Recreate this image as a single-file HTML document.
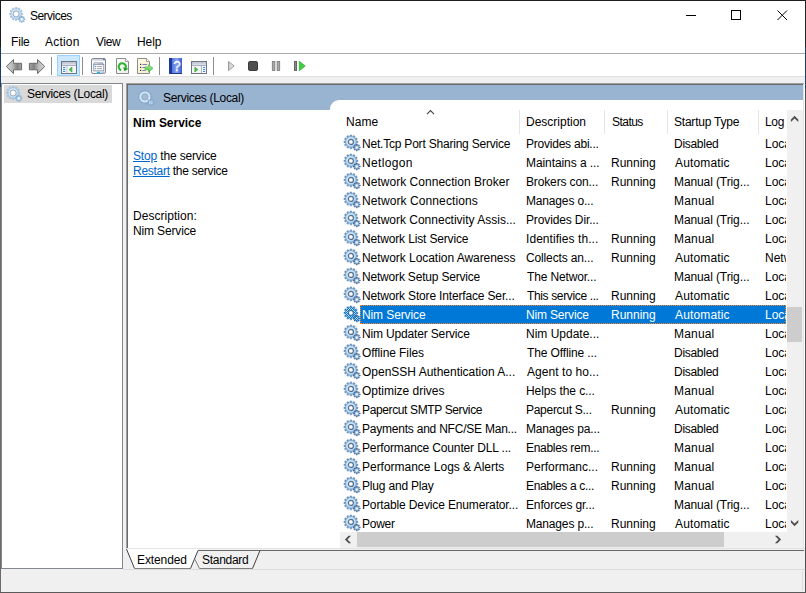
<!DOCTYPE html>
<html><head><meta charset="utf-8"><title>Services</title>
<style>
html,body{margin:0;padding:0}
body{width:806px;height:593px;overflow:hidden;background:#f0f0f0;font-family:"Liberation Sans",sans-serif;font-size:12px;color:#000;position:relative}
.a{position:absolute}
.t{position:absolute;white-space:nowrap;line-height:15px;height:15px}
.lk{color:#0066cc;text-decoration:underline}
svg{display:block;position:absolute;overflow:visible}
</style></head><body>
<svg width="0" height="0">
<defs>
<radialGradient id="gb" cx="45%" cy="40%" r="65%"><stop offset="0" stop-color="#e4f3fc"/><stop offset="0.6" stop-color="#c0e0f6"/><stop offset="1" stop-color="#9cc3e6"/></radialGradient>
<radialGradient id="gb2" cx="45%" cy="40%" r="65%"><stop offset="0" stop-color="#eef8fe"/><stop offset="0.6" stop-color="#d2ebfa"/><stop offset="1" stop-color="#b4d6f0"/></radialGradient>
<linearGradient id="ar" x1="0" y1="0" x2="0" y2="1"><stop offset="0" stop-color="#c9c9c9"/><stop offset="0.5" stop-color="#8a8a8a"/><stop offset="1" stop-color="#9c9c9c"/></linearGradient>
<linearGradient id="hb" x1="0" y1="0" x2="1" y2="0"><stop offset="0" stop-color="#3a5cc8"/><stop offset="0.5" stop-color="#7a9af0"/><stop offset="1" stop-color="#3f62cf"/></linearGradient>
<pattern id="chk" width="2" height="2" patternUnits="userSpaceOnUse"><rect x="0" y="0" width="1" height="1" fill="#0078d7"/><rect x="1" y="1" width="1" height="1" fill="#0078d7"/></pattern>

<mask id="gmask"><g fill="#fff"><path d="M13.85 6.05L13.85 7.75L11.92 7.79L11.69 8.64L13.34 9.64L12.49 11.11L10.81 10.18L10.18 10.81L11.11 12.49L9.64 13.34L8.64 11.69L7.79 11.92L7.75 13.85L6.05 13.85L6.01 11.92L5.16 11.69L4.16 13.34L2.69 12.49L3.62 10.81L2.99 10.18L1.31 11.11L0.46 9.64L2.11 8.64L1.88 7.79L-0.05 7.75L-0.05 6.05L1.88 6.01L2.11 5.16L0.46 4.16L1.31 2.69L2.99 3.62L3.62 2.99L2.69 1.31L4.16 0.46L5.16 2.11L6.01 1.88L6.05 -0.05L7.75 -0.05L7.79 1.88L8.64 2.11L9.64 0.46L11.11 1.31L10.18 2.99L10.81 3.62L12.49 2.69L13.34 4.16L11.69 5.16L11.92 6.01Z"/><circle cx="6.9" cy="6.9" r="5.6"/><path d="M16.26 11.95L16.26 13.05L14.85 12.97L14.58 13.61L15.63 14.56L14.86 15.33L13.91 14.28L13.27 14.55L13.35 15.96L12.25 15.96L12.33 14.55L11.69 14.28L10.74 15.33L9.97 14.56L11.02 13.61L10.75 12.97L9.34 13.05L9.34 11.95L10.75 12.03L11.02 11.39L9.97 10.44L10.74 9.67L11.69 10.72L12.33 10.45L12.25 9.04L13.35 9.04L13.27 10.45L13.91 10.72L14.86 9.67L15.63 10.44L14.58 11.39L14.85 12.03Z"/><circle cx="12.8" cy="12.5" r="2.5"/></g><circle cx="6.9" cy="6.9" r="2.4" fill="#000"/></mask>
<g id="g0">
<path d="M13.85 6.05L13.85 7.75L11.92 7.79L11.69 8.64L13.34 9.64L12.49 11.11L10.81 10.18L10.18 10.81L11.11 12.49L9.64 13.34L8.64 11.69L7.79 11.92L7.75 13.85L6.05 13.85L6.01 11.92L5.16 11.69L4.16 13.34L2.69 12.49L3.62 10.81L2.99 10.18L1.31 11.11L0.46 9.64L2.11 8.64L1.88 7.79L-0.05 7.75L-0.05 6.05L1.88 6.01L2.11 5.16L0.46 4.16L1.31 2.69L2.99 3.62L3.62 2.99L2.69 1.31L4.16 0.46L5.16 2.11L6.01 1.88L6.05 -0.05L7.75 -0.05L7.79 1.88L8.64 2.11L9.64 0.46L11.11 1.31L10.18 2.99L10.81 3.62L12.49 2.69L13.34 4.16L11.69 5.16L11.92 6.01Z" fill="#7298bf" stroke="#6089b4" stroke-width="0.5"/>
<circle cx="6.9" cy="6.9" r="5.3" fill="url(#gb)" stroke="#7298bf" stroke-width="0.5"/>
<path d="M16.26 11.95L16.26 13.05L14.85 12.97L14.58 13.61L15.63 14.56L14.86 15.33L13.91 14.28L13.27 14.55L13.35 15.96L12.25 15.96L12.33 14.55L11.69 14.28L10.74 15.33L9.97 14.56L11.02 13.61L10.75 12.97L9.34 13.05L9.34 11.95L10.75 12.03L11.02 11.39L9.97 10.44L10.74 9.67L11.69 10.72L12.33 10.45L12.25 9.04L13.35 9.04L13.27 10.45L13.91 10.72L14.86 9.67L15.63 10.44L14.58 11.39L14.85 12.03Z" fill="#4f76a6" stroke="#40628f" stroke-width="0.5"/>
<circle cx="12.8" cy="12.5" r="2.0" fill="#a6c9e8"/>
<circle cx="12.8" cy="12.5" r="1.0" fill="#f4f9fd"/>
<circle cx="6.9" cy="6.9" r="2.5" fill="#fff" stroke="#546c8a" stroke-width="1.2"/>
<circle cx="6.9" cy="6.9" r="1.6" fill="none" stroke="#c3d3e6" stroke-width="0.7" stroke-dasharray="0.9 0.9"/>
</g>
<g id="gt">
<path d="M13.85 6.05L13.85 7.75L11.92 7.79L11.69 8.64L13.34 9.64L12.49 11.11L10.81 10.18L10.18 10.81L11.11 12.49L9.64 13.34L8.64 11.69L7.79 11.92L7.75 13.85L6.05 13.85L6.01 11.92L5.16 11.69L4.16 13.34L2.69 12.49L3.62 10.81L2.99 10.18L1.31 11.11L0.46 9.64L2.11 8.64L1.88 7.79L-0.05 7.75L-0.05 6.05L1.88 6.01L2.11 5.16L0.46 4.16L1.31 2.69L2.99 3.62L3.62 2.99L2.69 1.31L4.16 0.46L5.16 2.11L6.01 1.88L6.05 -0.05L7.75 -0.05L7.79 1.88L8.64 2.11L9.64 0.46L11.11 1.31L10.18 2.99L10.81 3.62L12.49 2.69L13.34 4.16L11.69 5.16L11.92 6.01Z" fill="#a3c3e2" stroke="#94b8dc" stroke-width="0.5"/>
<circle cx="6.9" cy="6.9" r="5.3" fill="url(#gb2)" stroke="#a3c3e2" stroke-width="0.5"/>
<path d="M16.26 11.95L16.26 13.05L14.85 12.97L14.58 13.61L15.63 14.56L14.86 15.33L13.91 14.28L13.27 14.55L13.35 15.96L12.25 15.96L12.33 14.55L11.69 14.28L10.74 15.33L9.97 14.56L11.02 13.61L10.75 12.97L9.34 13.05L9.34 11.95L10.75 12.03L11.02 11.39L9.97 10.44L10.74 9.67L11.69 10.72L12.33 10.45L12.25 9.04L13.35 9.04L13.27 10.45L13.91 10.72L14.86 9.67L15.63 10.44L14.58 11.39L14.85 12.03Z" fill="#8fb2d6" stroke="#7fa4cc" stroke-width="0.5"/>
<circle cx="12.8" cy="12.5" r="2.0" fill="#c4dcf0"/>
<circle cx="12.8" cy="12.5" r="1.0" fill="#ffffff"/>
<circle cx="6.9" cy="6.9" r="3.2" fill="#fff" stroke="#7f8a98" stroke-width="0.8"/>
<circle cx="6.9" cy="6.9" r="2.3000000000000003" fill="none" stroke="#c3d3e6" stroke-width="0.7" stroke-dasharray="0.9 0.9"/>
</g>
<g id="gh">
<path d="M13.85 6.05L13.85 7.75L11.92 7.79L11.69 8.64L13.34 9.64L12.49 11.11L10.81 10.18L10.18 10.81L11.11 12.49L9.64 13.34L8.64 11.69L7.79 11.92L7.75 13.85L6.05 13.85L6.01 11.92L5.16 11.69L4.16 13.34L2.69 12.49L3.62 10.81L2.99 10.18L1.31 11.11L0.46 9.64L2.11 8.64L1.88 7.79L-0.05 7.75L-0.05 6.05L1.88 6.01L2.11 5.16L0.46 4.16L1.31 2.69L2.99 3.62L3.62 2.99L2.69 1.31L4.16 0.46L5.16 2.11L6.01 1.88L6.05 -0.05L7.75 -0.05L7.79 1.88L8.64 2.11L9.64 0.46L11.11 1.31L10.18 2.99L10.81 3.62L12.49 2.69L13.34 4.16L11.69 5.16L11.92 6.01Z" fill="#8eadd0" stroke="#86a7cc" stroke-width="0.5"/>
<circle cx="6.9" cy="6.9" r="4.3" fill="none" stroke="#cde8f8" stroke-width="2.4"/>
<circle cx="6.9" cy="6.9" r="3.2" fill="#a3bbd7" stroke="#8d99aa" stroke-width="0.6"/>
<path d="M16.26 11.95L16.26 13.05L14.85 12.97L14.58 13.61L15.63 14.56L14.86 15.33L13.91 14.28L13.27 14.55L13.35 15.96L12.25 15.96L12.33 14.55L11.69 14.28L10.74 15.33L9.97 14.56L11.02 13.61L10.75 12.97L9.34 13.05L9.34 11.95L10.75 12.03L11.02 11.39L9.97 10.44L10.74 9.67L11.69 10.72L12.33 10.45L12.25 9.04L13.35 9.04L13.27 10.45L13.91 10.72L14.86 9.67L15.63 10.44L14.58 11.39L14.85 12.03Z" fill="#8aaad0" stroke="#7f9fc6" stroke-width="0.4"/>
<circle cx="12.8" cy="12.5" r="2.1" fill="#b9d4ea"/>
<circle cx="12.8" cy="12.5" r="1" fill="#a6bfda"/>
</g>
<g id="g1"><use href="#g0"/><rect x="-1" y="-1" width="19" height="19" fill="url(#chk)" mask="url(#gmask)"/></g>
</defs></svg>

<div class="a" style="left:0px;top:0px;width:806px;height:593px;background:#f0f0f0"></div>
<div class="a" style="left:1px;top:1px;width:804px;height:52px;background:#fff"></div>
<svg style="left:9px;top:7px" width="17" height="17" viewBox="0 0 17 17"><use href="#gt" transform="translate(0.6 0.4) scale(0.95)"/></svg>
<svg style="left:680px;top:0px" width="125" height="30" viewBox="0 0 125 30"><path d="M6 15.5h10" stroke="#000" stroke-width="1" fill="none"/><rect x="51.5" y="10.5" width="9" height="9" fill="none" stroke="#000"/><path d="M97.5 10.5l9.5 9.5M107 10.5l-9.5 9.5" stroke="#000" stroke-width="1" fill="none"/></svg>
<div class="a" style="left:1px;top:53px;width:804px;height:1px;background:#adadad"></div>
<div class="a" style="left:1px;top:54px;width:804px;height:22px;background:#fff"></div>
<div class="a" style="left:1px;top:76px;width:804px;height:1px;background:#dfdfdf"></div>
<svg style="left:0;top:54px" width="320" height="24" viewBox="0 54 320 24">
<defs>
<linearGradient id="ar2" x1="0" y1="0" x2="1" y2="0"><stop offset="0" stop-color="#d6d6d6"/><stop offset="0.42" stop-color="#b8b8b8"/><stop offset="0.7" stop-color="#808080"/><stop offset="1" stop-color="#a4a4a4"/></linearGradient><linearGradient id="ar3" x1="1" y1="0" x2="0" y2="0"><stop offset="0" stop-color="#d6d6d6"/><stop offset="0.42" stop-color="#b8b8b8"/><stop offset="0.7" stop-color="#808080"/><stop offset="1" stop-color="#a4a4a4"/></linearGradient>
<linearGradient id="pg" x1="0" y1="0" x2="1" y2="1"><stop offset="0" stop-color="#ffffff"/><stop offset="1" stop-color="#ececec"/></linearGradient>
<linearGradient id="pg2" x1="0" y1="0" x2="1" y2="1"><stop offset="0" stop-color="#fffbea"/><stop offset="1" stop-color="#f8ecc4"/></linearGradient>
<linearGradient id="gr" x1="0" y1="0" x2="0" y2="1"><stop offset="0" stop-color="#a4ec9c"/><stop offset="1" stop-color="#4cc84c"/></linearGradient>
<linearGradient id="hb2" x1="0" y1="0" x2="1" y2="0"><stop offset="0" stop-color="#1c3aa0"/><stop offset="0.2" stop-color="#1c3aa0"/><stop offset="0.22" stop-color="#5576dc"/><stop offset="0.6" stop-color="#86a2f2"/><stop offset="1" stop-color="#3a5cc8"/></linearGradient>
<linearGradient id="pl" x1="0" y1="0" x2="1" y2="0"><stop offset="0" stop-color="#c4c4c4"/><stop offset="1" stop-color="#f6f6f6"/></linearGradient>
</defs>
<!-- back / forward -->
<path d="M6.3 66.5L13.5 59.5V63.3H21.6V69.8H13.5V73.6Z" fill="url(#ar2)" stroke="#6a6a6a" stroke-width="1" stroke-linejoin="round"/>
<path d="M44.7 66.5L37.5 59.5V63.3H29.4V69.8H37.5V73.6Z" fill="url(#ar3)" stroke="#6a6a6a" stroke-width="1" stroke-linejoin="round"/>
<!-- separators -->
<g fill="#8e8e8e"><rect x="51" y="57" width="1" height="18"/><rect x="82" y="57" width="1" height="18"/><rect x="159" y="57" width="1" height="18"/><rect x="213" y="57" width="1" height="18"/></g>
<!-- show/hide tree (active) -->
<rect x="57.5" y="55.5" width="22" height="20" fill="#cce8ff" stroke="#99d1ff"/>
<g>
<rect x="61.5" y="61.5" width="15" height="12" fill="#fff" stroke="#6e7587"/>
<rect x="62" y="62" width="14" height="1.6" fill="#8a92a6"/>
<rect x="62.4" y="62.4" width="9.4" height="0.8" fill="#eef0f5"/><rect x="72.6" y="62" width="1" height="1.2" fill="#fff"/><rect x="74.4" y="62" width="1" height="1.2" fill="#fff"/>
<rect x="62" y="63.6" width="14" height="1.6" fill="#d9dde8"/>
<rect x="62" y="65.2" width="14" height="0.7" fill="#8a92a6"/>
<rect x="66.6" y="65.5" width="0.8" height="8" fill="#9aa1b3"/>
<rect x="63" y="66.9" width="2.4" height="1" fill="#2f7fe0"/><rect x="63" y="68.9" width="2.4" height="1" fill="#2f7fe0"/><rect x="63" y="70.9" width="2.4" height="1" fill="#2f7fe0"/>
<rect x="67.6" y="66" width="8.2" height="7" fill="#f3f4f7"/>
<path d="M71.9 67.2V72L69 69.6Z" fill="#4cc04c" stroke="#35a535" stroke-width="0.7"/>
</g>
<!-- properties -->
<g>
<rect x="91.5" y="58.5" width="14" height="15" rx="1.6" fill="#fbfcfe" stroke="#747b8d" stroke-width="0.9"/>
<rect x="92" y="59" width="13" height="1.6" fill="#cfd3dc"/>
<rect x="103.2" y="58.6" width="1.6" height="1.6" fill="#4d5f8a"/>
<path d="M94 65.5V62.8H98.2V64H102.8V62.8H98.8" fill="none" stroke="#8d94a8" stroke-width="0.8"/>
<rect x="93.8" y="64.3" width="10" height="6.6" fill="#fbfbfd" stroke="#7b8398" stroke-width="0.8"/>
<rect x="95" y="65.9" width="1.2" height="1.2" fill="#18a8f0"/><rect x="97.2" y="66" width="4.8" height="0.9" fill="#9a9ca6"/>
<rect x="95" y="68.1" width="1.2" height="1.1" fill="#8a8e9a"/><rect x="97.2" y="68.2" width="4.8" height="0.9" fill="#9a9ca6"/>
<rect x="97" y="71.8" width="3.2" height="1.6" fill="#1fb4f2"/><rect x="101.4" y="71.8" width="2.8" height="1.6" fill="#b8bcc8"/>
</g>
<!-- refresh -->
<g>
<path d="M116.5 58.5H125.5L128.5 61.5V73.5H116.5Z" fill="url(#pg)" stroke="#8c8c8c"/>
<path d="M125.5 58.5V61.5H128.5" fill="#fff" stroke="#8c8c8c" stroke-width="0.8"/>
<path d="M121.07 70.18A3.6 3.6 0 1 1 125.68 68.03" fill="none" stroke="#2fb52f" stroke-width="2.1"/>
<path d="M124.5 71.2L128.3 68.7L123.1 67.2Z" fill="#239e23"/>
</g>
<!-- export list -->
<g>
<path d="M137.5 58.5H146.5L149.5 61.5V73.5H137.5Z" fill="url(#pg2)" stroke="#8c8c8c"/>
<path d="M146.5 58.5V61.5H149.5" fill="#fff" stroke="#8c8c8c" stroke-width="0.8"/>
<g fill="#303030"><rect x="140" y="63.8" width="1.2" height="1.2"/><rect x="140" y="66.8" width="1.2" height="1.2"/><rect x="140" y="69.8" width="1.2" height="1.2"/></g>
<g fill="#6670b8"><rect x="142.4" y="64" width="4.6" height="0.9"/><rect x="142.4" y="67" width="3" height="0.9"/><rect x="142.4" y="70" width="3" height="0.9"/></g>
<path d="M145 66.9H148.6V64.6L153 68.3L148.6 72V69.7H145Z" fill="url(#gr)" stroke="#3fae3f" stroke-width="0.6"/>
</g>
<!-- help -->
<g>
<rect x="169" y="58" width="13" height="16" fill="url(#hb2)"/>
<rect x="169" y="73" width="13" height="1" fill="#20358c"/>
<text x="176.9" y="70.9" font-family="Liberation Sans, sans-serif" font-size="15.5" fill="#fff" stroke="#fff" stroke-width="0.25" text-anchor="middle" transform="translate(176.9 0) scale(0.86 1) translate(-176.9 0)">?</text>
</g>
<!-- action pane -->
<g>
<rect x="191.5" y="61.5" width="15" height="12" fill="#fff" stroke="#6e7587"/>
<rect x="192" y="62" width="14" height="1.6" fill="#8a92a6"/>
<rect x="192.4" y="62.4" width="9.4" height="0.8" fill="#eef0f5"/><rect x="202.6" y="62" width="1" height="1.2" fill="#fff"/><rect x="204.4" y="62" width="1" height="1.2" fill="#fff"/>
<rect x="192" y="63.6" width="14" height="1.6" fill="#d9dde8"/>
<rect x="192" y="65.2" width="14" height="0.7" fill="#8a92a6"/>
<rect x="201" y="65.5" width="0.8" height="8" fill="#9aa1b3"/>
<rect x="203" y="66.9" width="2.2" height="1" fill="#2f7fe0"/><rect x="203" y="68.9" width="2.2" height="1" fill="#2f7fe0"/><rect x="203" y="70.9" width="2.2" height="1" fill="#2f7fe0"/>
<rect x="192.2" y="66" width="8.6" height="7" fill="#f3f4f7"/>
<path d="M194.9 67.2V72L197.9 69.6Z" fill="#4cc04c" stroke="#35a535" stroke-width="0.7"/>
</g>
<!-- play (disabled) -->
<path d="M228.5 61.5V70.5L234.2 66Z" fill="url(#pl)" stroke="#9c9c9c" stroke-linejoin="round"/>
<!-- stop -->
<rect x="248.5" y="61.5" width="9" height="9" rx="1.3" fill="#505050" stroke="#3c3c3c"/>
<!-- pause -->
<rect x="272.3" y="61.5" width="2.6" height="9" fill="#a6a6a6" stroke="#7a7a7a" stroke-width="0.8"/>
<rect x="277.1" y="61.5" width="2.6" height="9" fill="#a6a6a6" stroke="#7a7a7a" stroke-width="0.8"/>
<!-- restart -->
<rect x="294.4" y="61.5" width="2.2" height="9" fill="#8a8a8a" stroke="#505050" stroke-width="0.8"/>
<path d="M299.3 61.3V70.7L305.2 66Z" fill="#3fd03f" stroke="#2aa62a" stroke-width="0.7" stroke-linejoin="round"/>
</svg>

<div class="a" style="left:1px;top:83px;width:122px;height:486px;background:#fff;border:1px solid #828790;box-sizing:border-box"></div>
<div class="a" style="left:4px;top:85px;width:108px;height:18px;background:#d9d9d9"></div>
<svg style="left:6px;top:86px" width="17" height="17" viewBox="0 0 17 17"><use href="#gt" transform="translate(0.6 0.4) scale(0.95)"/></svg>
<div class="a" style="left:126px;top:83px;width:678px;height:466px;background:#fff"></div>
<div class="a" style="left:126px;top:83px;width:678px;height:1px;background:#a0a0a0"></div>
<div class="a" style="left:126px;top:83px;width:1px;height:465px;background:#a0a0a0"></div>
<div class="a" style="left:127px;top:84px;width:677px;height:1px;background:#696969"></div>
<div class="a" style="left:127px;top:84px;width:1px;height:464px;background:#696969"></div>
<div class="a" style="left:803px;top:84px;width:1px;height:465px;background:#e3e3e3"></div>
<div class="a" style="left:804px;top:83px;width:1px;height:466px;background:#fff"></div>
<div class="a" style="left:128px;top:85px;width:675px;height:25px;background:#99b4d1"></div>
<svg style="left:137.7px;top:90.1px" width="17" height="17" viewBox="0 0 17 17"><use href="#gh"/></svg>
<div class="a" style="left:330px;top:100px;width:473px;height:12px;background:#fff;border-top-left-radius:9px"></div>
<div class="a" style="left:519px;top:110px;width:1px;height:24px;background:#e5e5e5"></div>
<div class="a" style="left:604px;top:110px;width:1px;height:24px;background:#e5e5e5"></div>
<div class="a" style="left:667px;top:110px;width:1px;height:24px;background:#e5e5e5"></div>
<div class="a" style="left:758px;top:110px;width:1px;height:24px;background:#e5e5e5"></div>
<svg style="left:425px;top:109px" width="11" height="6" viewBox="0 0 11 6"><path d="M2 5.2L5.5 1.6L9 5.2" stroke="#454545" fill="none" stroke-width="1.15"/></svg>
<svg style="left:344px;top:135px" width="17" height="17" viewBox="0 0 17 17"><use href="#g0"/></svg>
<svg style="left:344px;top:154px" width="17" height="17" viewBox="0 0 17 17"><use href="#g0"/></svg>
<svg style="left:344px;top:173px" width="17" height="17" viewBox="0 0 17 17"><use href="#g0"/></svg>
<svg style="left:344px;top:192px" width="17" height="17" viewBox="0 0 17 17"><use href="#g0"/></svg>
<svg style="left:344px;top:211px" width="17" height="17" viewBox="0 0 17 17"><use href="#g0"/></svg>
<svg style="left:344px;top:230px" width="17" height="17" viewBox="0 0 17 17"><use href="#g0"/></svg>
<svg style="left:344px;top:249px" width="17" height="17" viewBox="0 0 17 17"><use href="#g0"/></svg>
<svg style="left:344px;top:268px" width="17" height="17" viewBox="0 0 17 17"><use href="#g0"/></svg>
<svg style="left:344px;top:287px" width="17" height="17" viewBox="0 0 17 17"><use href="#g0"/></svg>
<div class="a" style="left:360px;top:305px;width:426px;height:19px;background:#0078d7;border:1px dotted #ff8728;box-sizing:border-box"></div>
<svg style="left:344px;top:306px" width="17" height="17" viewBox="0 0 17 17"><use href="#g1"/></svg>
<svg style="left:344px;top:325px" width="17" height="17" viewBox="0 0 17 17"><use href="#g0"/></svg>
<svg style="left:344px;top:344px" width="17" height="17" viewBox="0 0 17 17"><use href="#g0"/></svg>
<svg style="left:344px;top:363px" width="17" height="17" viewBox="0 0 17 17"><use href="#g0"/></svg>
<svg style="left:344px;top:382px" width="17" height="17" viewBox="0 0 17 17"><use href="#g0"/></svg>
<svg style="left:344px;top:401px" width="17" height="17" viewBox="0 0 17 17"><use href="#g0"/></svg>
<svg style="left:344px;top:420px" width="17" height="17" viewBox="0 0 17 17"><use href="#g0"/></svg>
<svg style="left:344px;top:439px" width="17" height="17" viewBox="0 0 17 17"><use href="#g0"/></svg>
<svg style="left:344px;top:458px" width="17" height="17" viewBox="0 0 17 17"><use href="#g0"/></svg>
<svg style="left:344px;top:477px" width="17" height="17" viewBox="0 0 17 17"><use href="#g0"/></svg>
<svg style="left:344px;top:496px" width="17" height="17" viewBox="0 0 17 17"><use href="#g0"/></svg>
<svg style="left:344px;top:515px" width="17" height="17" viewBox="0 0 17 17"><use href="#g0"/></svg>
<div class="t" id="t0" style="left:30.00px;top:9px;letter-spacing:-0.527px">Services</div>
<div class="t" id="t1" style="left:11.00px;top:35px;letter-spacing:-0.180px">File</div>
<div class="t" id="t2" style="left:45.00px;top:35px;letter-spacing:0.216px">Action</div>
<div class="t" id="t3" style="left:96.00px;top:35px;letter-spacing:-0.360px">View</div>
<div class="t" id="t4" style="left:137.00px;top:35px;letter-spacing:-0.060px">Help</div>
<div class="t" id="t5" style="left:27.00px;top:87px;letter-spacing:-0.318px">Services (Local)</div>
<div class="t" id="t6" style="left:163.00px;top:91px;letter-spacing:-0.318px">Services (Local)</div>
<div class="t" id="t7" style="left:133.00px;top:116px;letter-spacing:-0.027px;font-weight:bold">Nim Service</div>
<div class="t" id="t8" style="left:133.00px;top:149px;letter-spacing:-0.156px"><span class="lk">Stop</span> the service</div>
<div class="t" id="t9" style="left:133.00px;top:164px;letter-spacing:-0.280px"><span class="lk">Restart</span> the service</div>
<div class="t" id="t10" style="left:133.00px;top:209px;letter-spacing:0.033px">Description:</div>
<div class="t" id="t11" style="left:133.00px;top:224px;letter-spacing:-0.144px">Nim Service</div>
<div class="t" id="t12" style="left:346.00px;top:115px;letter-spacing:0.060px">Name</div>
<div class="t" id="t13" style="left:526.00px;top:115px;letter-spacing:0.000px">Description</div>
<div class="t" id="t14" style="left:612.00px;top:115px;letter-spacing:-0.540px">Status</div>
<div class="t" id="t15" style="left:674.00px;top:115px;letter-spacing:-0.213px">Startup Type</div>
<div class="t" id="t16" style="left:765.00px;top:115px;letter-spacing:-0.360px">Log</div>
<div class="t" id="t19" style="left:362.00px;top:137px;letter-spacing:-0.207px">Net.Tcp Port Sharing Service</div>
<div class="t" id="t20" style="left:526.00px;top:137px;letter-spacing:-0.225px">Provides abi...</div>
<div class="t" id="t21" style="left:674.00px;top:137px;letter-spacing:-0.283px">Disabled</div>
<div class="t" id="t22" style="left:765.00px;top:137px">Loca</div>
<div class="t" id="t23" style="left:362.00px;top:156px;letter-spacing:0.328px">Netlogon</div>
<div class="t" id="t24" style="left:526.00px;top:156px;letter-spacing:-0.080px">Maintains a ...</div>
<div class="t" id="t25" style="left:611.00px;top:156px;letter-spacing:-0.000px">Running</div>
<div class="t" id="t26" style="left:675.00px;top:156px;letter-spacing:0.158px">Automatic</div>
<div class="t" id="t27" style="left:765.00px;top:156px">Loca</div>
<div class="t" id="t28" style="left:362.00px;top:175px;letter-spacing:0.030px">Network Connection Broker</div>
<div class="t" id="t29" style="left:526.00px;top:175px;letter-spacing:-0.138px">Brokers con...</div>
<div class="t" id="t30" style="left:611.00px;top:175px;letter-spacing:-0.000px">Running</div>
<div class="t" id="t31" style="left:674.00px;top:175px;letter-spacing:-0.103px">Manual (Trig...</div>
<div class="t" id="t32" style="left:765.00px;top:175px">Loca</div>
<div class="t" id="t33" style="left:362.00px;top:194px;letter-spacing:0.090px">Network Connections</div>
<div class="t" id="t34" style="left:526.00px;top:194px;letter-spacing:-0.164px">Manages o...</div>
<div class="t" id="t35" style="left:674.00px;top:194px;letter-spacing:0.180px">Manual</div>
<div class="t" id="t36" style="left:765.00px;top:194px">Loca</div>
<div class="t" id="t37" style="left:362.00px;top:213px;letter-spacing:-0.006px">Network Connectivity Assis...</div>
<div class="t" id="t38" style="left:526.00px;top:213px;letter-spacing:-0.129px">Provides Dir...</div>
<div class="t" id="t39" style="left:674.00px;top:213px;letter-spacing:-0.103px">Manual (Trig...</div>
<div class="t" id="t40" style="left:765.00px;top:213px">Loca</div>
<div class="t" id="t41" style="left:362.00px;top:232px;letter-spacing:-0.152px">Network List Service</div>
<div class="t" id="t42" style="left:526.00px;top:232px;letter-spacing:0.060px">Identifies th...</div>
<div class="t" id="t43" style="left:611.00px;top:232px;letter-spacing:-0.000px">Running</div>
<div class="t" id="t44" style="left:674.00px;top:232px;letter-spacing:0.180px">Manual</div>
<div class="t" id="t45" style="left:765.00px;top:232px">Loca</div>
<div class="t" id="t46" style="left:362.00px;top:251px;letter-spacing:-0.043px">Network Location Awareness</div>
<div class="t" id="t47" style="left:526.00px;top:251px;letter-spacing:-0.138px">Collects an...</div>
<div class="t" id="t48" style="left:611.00px;top:251px;letter-spacing:-0.000px">Running</div>
<div class="t" id="t49" style="left:675.00px;top:251px;letter-spacing:0.158px">Automatic</div>
<div class="t" id="t50" style="left:765.00px;top:251px">Netw</div>
<div class="t" id="t51" style="left:362.00px;top:270px;letter-spacing:-0.189px">Network Setup Service</div>
<div class="t" id="t52" style="left:527.00px;top:270px;letter-spacing:-0.150px">The Networ...</div>
<div class="t" id="t53" style="left:674.00px;top:270px;letter-spacing:-0.103px">Manual (Trig...</div>
<div class="t" id="t54" style="left:765.00px;top:270px">Loca</div>
<div class="t" id="t55" style="left:362.00px;top:289px;letter-spacing:-0.161px">Network Store Interface Ser...</div>
<div class="t" id="t56" style="left:527.00px;top:289px;letter-spacing:-0.360px">This service ...</div>
<div class="t" id="t57" style="left:611.00px;top:289px;letter-spacing:-0.000px">Running</div>
<div class="t" id="t58" style="left:675.00px;top:289px;letter-spacing:0.158px">Automatic</div>
<div class="t" id="t59" style="left:765.00px;top:289px">Loca</div>
<div class="t" id="t60" style="left:362.00px;top:308px;letter-spacing:-0.108px;color:#fff">Nim Service</div>
<div class="t" id="t61" style="left:526.00px;top:308px;letter-spacing:-0.180px;color:#fff">Nim Service</div>
<div class="t" id="t62" style="left:611.00px;top:308px;letter-spacing:-0.000px;color:#fff">Running</div>
<div class="t" id="t63" style="left:675.00px;top:308px;letter-spacing:0.158px;color:#fff">Automatic</div>
<div class="t" id="t64" style="left:765.00px;top:308px;color:#fff">Loca</div>
<div class="t" id="t65" style="left:362.00px;top:327px;letter-spacing:-0.160px">Nim Updater Service</div>
<div class="t" id="t66" style="left:526.00px;top:327px;letter-spacing:0.000px">Nim Update...</div>
<div class="t" id="t67" style="left:674.00px;top:327px;letter-spacing:0.180px">Manual</div>
<div class="t" id="t68" style="left:765.00px;top:327px">Loca</div>
<div class="t" id="t69" style="left:362.00px;top:346px;letter-spacing:-0.090px">Offline Files</div>
<div class="t" id="t70" style="left:527.00px;top:346px;letter-spacing:-0.129px">The Offline ...</div>
<div class="t" id="t71" style="left:674.00px;top:346px;letter-spacing:-0.283px">Disabled</div>
<div class="t" id="t72" style="left:765.00px;top:346px">Loca</div>
<div class="t" id="t73" style="left:362.00px;top:365px;letter-spacing:-0.007px">OpenSSH Authentication A...</div>
<div class="t" id="t74" style="left:527.00px;top:365px;letter-spacing:0.052px">Agent to ho...</div>
<div class="t" id="t75" style="left:674.00px;top:365px;letter-spacing:-0.283px">Disabled</div>
<div class="t" id="t76" style="left:765.00px;top:365px">Loca</div>
<div class="t" id="t77" style="left:362.00px;top:384px;letter-spacing:-0.013px">Optimize drives</div>
<div class="t" id="t78" style="left:526.00px;top:384px;letter-spacing:-0.087px">Helps the c...</div>
<div class="t" id="t79" style="left:674.00px;top:384px;letter-spacing:0.180px">Manual</div>
<div class="t" id="t80" style="left:765.00px;top:384px">Loca</div>
<div class="t" id="t81" style="left:362.00px;top:403px;letter-spacing:-0.369px">Papercut SMTP Service</div>
<div class="t" id="t82" style="left:526.00px;top:403px;letter-spacing:-0.281px">Papercut S...</div>
<div class="t" id="t83" style="left:611.00px;top:403px;letter-spacing:-0.000px">Running</div>
<div class="t" id="t84" style="left:675.00px;top:403px;letter-spacing:0.158px">Automatic</div>
<div class="t" id="t85" style="left:765.00px;top:403px">Loca</div>
<div class="t" id="t86" style="left:362.00px;top:422px;letter-spacing:-0.223px">Payments and NFC/SE Man...</div>
<div class="t" id="t87" style="left:526.00px;top:422px;letter-spacing:-0.169px">Manages pa...</div>
<div class="t" id="t88" style="left:674.00px;top:422px;letter-spacing:-0.283px">Disabled</div>
<div class="t" id="t89" style="left:765.00px;top:422px">Loca</div>
<div class="t" id="t90" style="left:362.00px;top:441px;letter-spacing:-0.145px">Performance Counter DLL ...</div>
<div class="t" id="t91" style="left:526.00px;top:441px;letter-spacing:-0.294px">Enables rem...</div>
<div class="t" id="t92" style="left:674.00px;top:441px;letter-spacing:0.180px">Manual</div>
<div class="t" id="t93" style="left:765.00px;top:441px">Loca</div>
<div class="t" id="t94" style="left:362.00px;top:460px;letter-spacing:-0.017px">Performance Logs &amp; Alerts</div>
<div class="t" id="t95" style="left:526.00px;top:460px;letter-spacing:0.000px">Performanc...</div>
<div class="t" id="t96" style="left:611.00px;top:460px;letter-spacing:-0.000px">Running</div>
<div class="t" id="t97" style="left:674.00px;top:460px;letter-spacing:0.180px">Manual</div>
<div class="t" id="t98" style="left:765.00px;top:460px">Loca</div>
<div class="t" id="t99" style="left:362.00px;top:479px;letter-spacing:-0.184px">Plug and Play</div>
<div class="t" id="t100" style="left:526.00px;top:479px;letter-spacing:-0.346px">Enables a c...</div>
<div class="t" id="t101" style="left:611.00px;top:479px;letter-spacing:-0.000px">Running</div>
<div class="t" id="t102" style="left:674.00px;top:479px;letter-spacing:0.180px">Manual</div>
<div class="t" id="t103" style="left:765.00px;top:479px">Loca</div>
<div class="t" id="t104" style="left:362.00px;top:498px;letter-spacing:-0.135px">Portable Device Enumerator...</div>
<div class="t" id="t105" style="left:526.00px;top:498px;letter-spacing:-0.138px">Enforces gr...</div>
<div class="t" id="t106" style="left:674.00px;top:498px;letter-spacing:-0.103px">Manual (Trig...</div>
<div class="t" id="t107" style="left:765.00px;top:498px">Loca</div>
<div class="t" id="t108" style="left:362.00px;top:517px;letter-spacing:-0.270px">Power</div>
<div class="t" id="t109" style="left:526.00px;top:517px;letter-spacing:-0.164px">Manages p...</div>
<div class="t" id="t110" style="left:611.00px;top:517px;letter-spacing:-0.000px">Running</div>
<div class="t" id="t111" style="left:675.00px;top:517px;letter-spacing:0.158px">Automatic</div>
<div class="t" id="t112" style="left:765.00px;top:517px">Loca</div>
<div class="a" style="left:786px;top:110px;width:1px;height:422px;background:#fff"></div>
<div class="a" style="left:787px;top:110px;width:16px;height:422px;background:#f0f0f0"></div>
<div class="a" style="left:787px;top:307px;width:15px;height:35px;background:#cdcdcd"></div>
<div class="a" style="left:340px;top:532px;width:463px;height:16px;background:#f0f0f0"></div>
<div class="a" style="left:357px;top:532px;width:367px;height:15px;background:#cdcdcd"></div>
<svg style="left:0;top:0" width="806" height="593" viewBox="0 0 806 593"><g fill="#505050"><path d="M794.6 115.8L798.3 119.5V122L794.6 118.4L790.9 122V119.5Z"/><path d="M794.6 526.2L798.3 522.5V520L794.6 523.6L790.9 520V522.5Z"/><path d="M344.9 539.5L348.6 535.8H351.1L347.5 539.5L351.1 543.2H348.6Z"/><path d="M781.1 539.5L777.4 535.8H774.9L778.5 539.5L774.9 543.2H777.4Z"/></g></svg>
<div class="a" style="left:126px;top:548px;width:679px;height:1px;background:#e3e3e3"></div>
<div class="a" style="left:126px;top:549px;width:679px;height:20px;background:#f0f0f0"></div>
<svg style="left:126px;top:548px" width="680" height="22" viewBox="0 0 680 22"><path d="M0.5 1L8.5 20.5H64.5L72 2.5V1Z" fill="#fff"/><path d="M0.5 1L8.5 20.5" fill="none" stroke="#404040"/><path d="M8.5 20.5H64.5" fill="none" stroke="#808080"/><path d="M64.5 20.5L72 2.5" fill="none" stroke="#404040"/><path d="M72 2.5H678" fill="none" stroke="#696969"/><path d="M68.7 11L73.5 20.5H126.5" fill="none" stroke="#808080"/><path d="M126.5 20.5L134 2.5" fill="none" stroke="#404040"/></svg>
<div class="t" id="t17" style="left:137.00px;top:553px;letter-spacing:-0.103px">Extended</div>
<div class="t" id="t18" style="left:202.00px;top:553px;letter-spacing:-0.283px">Standard</div>
<div class="a" style="left:123px;top:569px;width:682px;height:1px;background:#dcdcdc"></div>
<div class="a" style="left:802px;top:571px;width:1px;height:20px;background:#dcdcdc"></div>
<div class="a" style="left:0px;top:0px;width:806px;height:1px;background:#1c1c1c"></div>
<div class="a" style="left:0px;top:0px;width:1px;height:593px;background:linear-gradient(#1c1c1c 0,#1c1c1c 47px,#17375f 47px,#1f3f6f 87px,#6a6a6a 87px)"></div>
<div class="a" style="left:805px;top:0px;width:1px;height:593px;background:linear-gradient(#222 0,#222 47px,#1f3d6d 47px,#1f3d6d 89px,#505050 89px)"></div>
<div class="a" style="left:0px;top:592px;width:806px;height:1px;background:#5a5a5a"></div>
</body></html>
